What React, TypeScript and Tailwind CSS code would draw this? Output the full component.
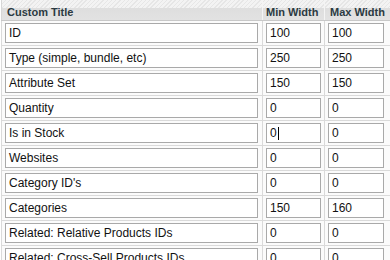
const rows: { title: string; min: string; max: string; caret?: boolean }[] = [
  { title: "ID", min: "100", max: "100" },
  { title: "Type (simple, bundle, etc)", min: "250", max: "250" },
  { title: "Attribute Set", min: "150", max: "150" },
  { title: "Quantity", min: "0", max: "0" },
  { title: "Is in Stock", min: "0", max: "0", caret: true },
  { title: "Websites", min: "0", max: "0" },
  { title: "Category ID's", min: "0", max: "0" },
  { title: "Categories", min: "150", max: "160" },
  { title: "Related: Relative Products IDs", min: "0", max: "0" },
  { title: "Related: Cross-Sell Products IDs", min: "0", max: "0" },
  { title: "Related: Up-Sell Products IDs", min: "0", max: "0" },
];

function Field({ value, caret }: { value: string; caret?: boolean }) {
  return (
    <div className="h-5 w-full border border-[#a9a9a9] bg-white pl-[3px] text-[12px] leading-[18px] text-[#111] whitespace-nowrap overflow-hidden flex items-center">
      <span>{value}</span>
      {caret && <span className="ml-px inline-block h-[13px] w-px bg-black" />}
    </div>
  );
}

export default function App() {
  return (
    <div
      className="w-[390px] h-[260px] overflow-hidden bg-white"
      style={{ fontFamily: '"Liberation Sans", Arial, sans-serif' }}
    >
      <div className="pl-px">
        <div className="flex h-[21px] border-b border-[#c8c8c8] bg-[linear-gradient(to_bottom,transparent_0,transparent_8px,#dedede_8px,#e2e2e2_20px),repeating-linear-gradient(135deg,#e6e6e6_0px,#e6e6e6_1px,#f3f3f3_1px,#f3f3f3_3px)] text-[11px] font-bold leading-[13px] text-[#2b3a42]">
          <div className="w-[261px] border-l border-[#d6d6d6] pl-[5px] pt-[6px]">Custom Title</div>
          <div className="w-[62px] border-l border-[#f4f4f4] pl-[3px] pt-[6px] whitespace-nowrap">Min Width</div>
          <div className="flex-1 border-l border-[#f4f4f4] pl-[5px] pt-[6px] whitespace-nowrap">Max Width</div>
        </div>
        {rows.map((r) => (
          <div key={r.title} className="flex h-[25px] border-b border-[#dadada] bg-[#fbfbfb]">
            <div className="w-[261px] border-l border-[#dadada] pl-[3px] pr-[4px] pt-[2px]">
              <Field value={r.title} />
            </div>
            <div className="w-[62px] border-l border-[#dadada] pl-[3px] pr-[3px] pt-[2px]">
              <Field value={r.min} caret={r.caret} />
            </div>
            <div className="w-[66px] border-l border-[#dadada] pl-[3px] pr-[6px] pt-[2px]">
              <Field value={r.max} />
            </div>
          </div>
        ))}
      </div>
    </div>
  );
}
